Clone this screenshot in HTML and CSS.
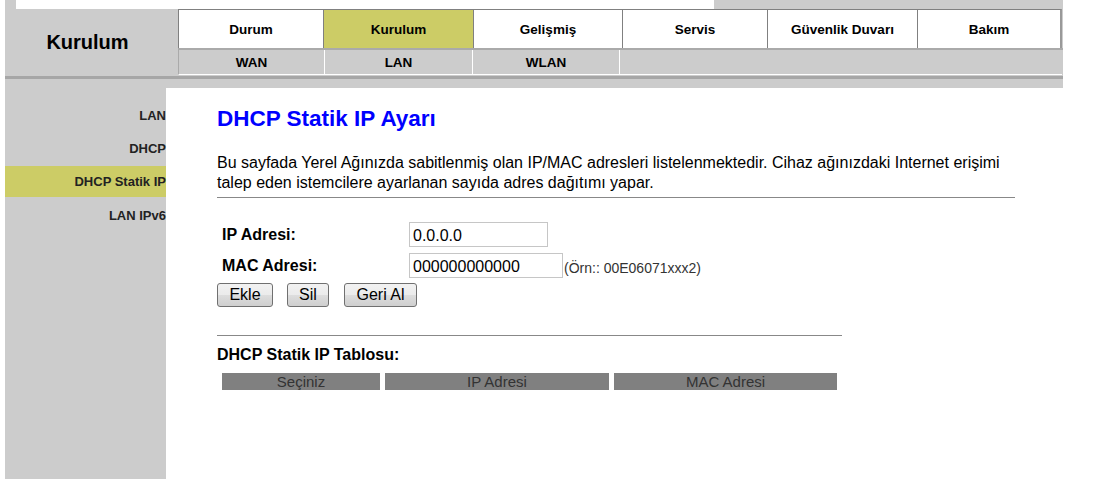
FILE: index.html
```html
<!DOCTYPE html>
<html lang="tr">
<head>
    <meta charset="UTF-8">
    <title>DHCP Statik IP Ayarı</title>
    <link rel="stylesheet" href="styles.css">
</head>
<body>

<div class="page">
    <!-- leftover of the top banner -->
    <div class="top-strip">
        <div class="strip-left"></div>
        <div class="strip-white"></div>
        <div class="strip-right"></div>
    </div>

    <!-- Main menu -->
    <div class="header">
        <div class="section-title">Kurulum</div>
        <div class="menus">
            <ul class="tabs">
                <li class="w145">Durum</li>
                <li class="w150 active">Kurulum</li>
                <li class="w149">Gelişmiş</li>
                <li class="w145">Servis</li>
                <li class="w150">Güvenlik Duvarı</li>
                <li class="w145 last">Bakım</li>
            </ul>
            <ul class="subtabs">
                <li class="s1">WAN</li>
                <li class="s2">LAN</li>
                <li class="s3">WLAN</li>
                <li class="s4"></li>
            </ul>
        </div>
    </div>
    <div class="header-line"></div>
    <div class="header-band"></div>

    <div class="main">
        <!-- Side menu -->
        <ul class="sidebar">
            <li>LAN</li>
            <li>DHCP</li>
            <li class="selected">DHCP Statik IP</li>
            <li>LAN IPv6</li>
        </ul>

        <div class="content">
            <h1>DHCP Statik IP Ayarı</h1>
            <p class="intro">Bu sayfada Yerel Ağınızda sabitlenmiş olan IP/MAC adresleri listelenmektedir. Cihaz ağınızdaki Internet erişimi talep eden istemcilere ayarlanan sayıda adres dağıtımı yapar.</p>
            <hr class="line-wide">

            <div class="form-row">
                <label>IP Adresi:</label>
                <input type="text" class="ip-input" value="0.0.0.0">
            </div>
            <div class="form-row">
                <label>MAC Adresi:</label>
                <input type="text" class="mac-input" value="000000000000">
                <span class="hint">(Örn:: 00E06071xxx2)</span>
            </div>
            <div class="buttons">
                <button class="btn-ekle">Ekle</button>
                <button class="btn-sil">Sil</button>
                <button class="btn-geri">Geri Al</button>
            </div>

            <hr class="line-short">
            <h3>DHCP Statik IP Tablosu:</h3>
            <div class="table-head">
                <div class="col-sec">Seçiniz</div>
                <div class="col-ip">IP Adresi</div>
                <div class="col-mac">MAC Adresi</div>
            </div>
        </div>
    </div>
</div>

</body>
</html>
```

FILE: styles.css
```css
/* General styles */
html, body {
    margin: 0;
    padding: 0;
    height: 100%;
    background-color: white;
}

body {
    font-family: "Liberation Sans", Arial, sans-serif;
    color: #000;
}

.page {
    margin-left: 5px;
    width: 1058px;
    height: 100%;
    display: flex;
    flex-direction: column;
}

ul {
    list-style-type: none;
    margin: 0;
    padding: 0;
}

/* Top strip */
.top-strip {
    display: flex;
    height: 9px;
}

.strip-left {
    width: 11px;
    background-color: #cccccc;
}

.strip-white {
    width: 698px;
    background-color: white;
}

.strip-right {
    flex: 1;
    background-color: #cccccc;
}

/* Header / main menu */
.header {
    display: flex;
    background-color: #cccccc;
    height: 67px;
}

.section-title {
    width: 165px;
    padding-right: 8px;
    display: flex;
    align-items: center;
    justify-content: center;
    font-size: 20px;
    font-weight: bold;
}

.menus {
    flex: 1;
}

.tabs {
    display: flex;
    height: 39px;
}

.tabs li {
    box-sizing: border-box;
    background-color: white;
    border-top: 1px solid #808080;
    border-left: 1px solid #808080;
    display: flex;
    align-items: center;
    justify-content: center;
    font-size: 13.5px;
    font-weight: bold;
    padding-top: 1px;
}

.tabs li.active {
    background-color: #cccc66;
}

.tabs li.last {
    border-right: 2px solid #999999;
}

.w145 { width: 145px; }
.w149 { width: 149px; }
.w150 { width: 150px; }

.subtabs {
    display: flex;
    height: 27px;
    border-top: 2px solid #aaaaaa;
    box-sizing: border-box;
}

.subtabs li {
    box-sizing: border-box;
    background-color: #cccccc;
    border-left: 1px solid white;
    border-bottom: 1px solid white;
    display: flex;
    align-items: center;
    justify-content: center;
    font-size: 13.5px;
    font-weight: bold;
}

.subtabs li.s1 { width: 146px; border-left: 1px solid #aaaaaa; }
.subtabs li.s2 { width: 148px; }
.subtabs li.s3 { width: 147px; }
.subtabs li.s4 { width: 443px; }

.header-line {
    height: 3px;
    background-color: #a6a6a6;
}

.header-band {
    height: 9px;
    background-color: #cccccc;
}

/* Body area */
.main {
    flex: 1;
    display: flex;
}

.sidebar {
    width: 161px;
    background-color: #cccccc;
    padding-top: 11px;
}

.sidebar li {
    height: 33px;
    line-height: 33px;
    text-align: right;
    font-size: 13px;
    font-weight: bold;
    color: #222;
}

.sidebar li.selected {
    background-color: #cccc66;
    height: 31px;
    line-height: 31px;
    margin: 1px 0 2px;
}

.content {
    flex: 1;
    padding-left: 51px;
}

.content h1 {
    color: #0000ff;
    font-size: 22.5px;
    margin: 18px 0 0;
}

.intro {
    font-size: 16px;
    line-height: 20px;
    width: 798px;
    margin: 21px 0 0;
}

hr {
    border: none;
    height: 1px;
    background-color: #888888;
    margin: 0;
}

.line-wide {
    width: 798px;
    margin-top: 4px;
}

.form-row {
    display: flex;
    align-items: center;
    height: 31px;
    padding-left: 5px;
}

.form-row:first-of-type {
    margin-top: 21px;
}

.form-row label {
    width: 187px;
    font-size: 16px;
    font-weight: bold;
}

.form-row input {
    box-sizing: border-box;
    height: 25px;
    border: 1px solid #c6c6c6;
    font-family: "Liberation Sans", Arial, sans-serif;
    font-size: 16px;
    padding: 2px 3px 0;
}

.ip-input { width: 139px; }
.mac-input { width: 154px; }

.hint {
    font-size: 14px;
    color: #333;
    margin-left: 1px;
    margin-top: 4px;
}

.buttons {
    display: flex;
    gap: 14px;
    margin-top: 2px;
}

.buttons button {
    box-sizing: border-box;
    height: 24px;
    border: 1px solid #707070;
    border-radius: 3px;
    background: linear-gradient(#f2f2f2, #ebebeb 50%, #dddddd 51%, #cfcfcf);
    font-family: "Liberation Sans", Arial, sans-serif;
    font-size: 16px;
    padding: 0;
    color: #000;
}

.btn-ekle { width: 56px; }
.btn-sil { width: 42px; }
.btn-geri { width: 73px; margin-left: 1px; }

.line-short {
    width: 625px;
    margin-top: 28px;
}

.content h3 {
    font-size: 16px;
    margin: 10px 0 0;
}

.table-head {
    display: flex;
    gap: 5px;
    margin: 9px 0 0 5px;
}

.table-head div {
    background-color: #808080;
    color: #333333;
    font-size: 15px;
    height: 17px;
    line-height: 17px;
    text-align: center;
}

.col-sec { width: 158px; }
.col-ip { width: 224px; }
.col-mac { width: 223px; }
```
